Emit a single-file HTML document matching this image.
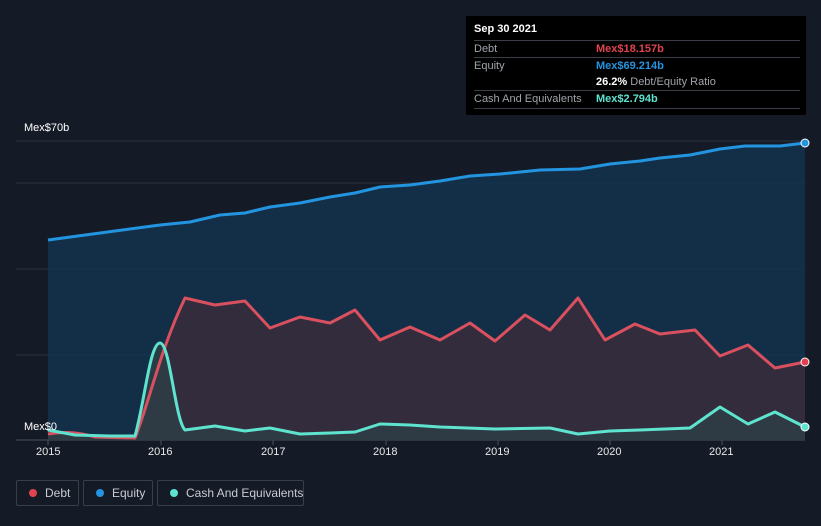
<!DOCTYPE html><html><head><style>
body{margin:0;background:#151b26;width:821px;height:526px;overflow:hidden;font-family:"Liberation Sans",sans-serif;position:relative}
.tt{position:absolute;left:466px;top:16px;width:340px;height:99px;background:#000;color:#fff;font-size:11px}
.r{position:absolute;left:8px;width:326px;border-top:1px solid #3a3f47;height:17px;line-height:17px}
.r span{position:absolute;left:122px;font-weight:bold}
.g{color:#a0a4ab}
.lg{position:absolute;top:480px;height:26px;border:1px solid #3a3f47;border-radius:2px;color:#c8cbd0;font-size:12px;line-height:24px;box-sizing:border-box;padding-left:28px;white-space:nowrap}
.lg i{position:absolute;left:12px;top:8px;width:8px;height:8px;border-radius:50%}
.ax{position:absolute;top:446px;color:#e8e8e8;font-size:11px}
</style></head><body>
<svg width="821" height="526" style="position:absolute;left:0;top:0">
<g stroke="#2d333c" stroke-width="1"><line x1="16" y1="141" x2="805" y2="141"/><line x1="16" y1="183" x2="805" y2="183"/><line x1="16" y1="269" x2="805" y2="269"/><line x1="16" y1="355" x2="805" y2="355"/><line x1="16" y1="440" x2="805" y2="440" stroke="#4a5058"/></g>
<path d="M48,240 L160,225 190,222 220,215 245,213 270,207 300,203 330,197 355,193 380,187 410,185 440,181 470,176 500,174 540,170 580,169 610,164 640,161 660,158 690,155 720,149 745,146 780,146 805,143 L805,440 48,440Z" fill="#13324d" opacity="0.9"/>
<path d="M48,434 C60,432 75,431 95,437 L135,438 C150,400 160,350 185,298 L215,305 245,301 270,328 300,317 330,323 355,310 380,340 410,327 440,340 470,323 495,341 525,315 550,330 578,298 605,340 635,324 660,334 695,330 720,356 748,345 775,368 805,362 L805,440 48,440Z" fill="#3a2c3c" opacity="0.85"/>
<path d="M48,430 L75,435 110,436 135,436 C145,400 150,343 160,343 C170,343 175,420 185,430 L215,426 245,431 270,428 300,434 330,433 355,432 380,424 410,425 440,427 495,429 550,428 578,434 610,431 640,430 690,428 720,407 748,424 775,412 805,427 L805,440 48,440Z" fill="#2e4046" opacity="0.8"/>
<g fill="none" stroke-width="3" stroke-linejoin="round">
<path d="M48,240 L160,225 190,222 220,215 245,213 270,207 300,203 330,197 355,193 380,187 410,185 440,181 470,176 500,174 540,170 580,169 610,164 640,161 660,158 690,155 720,149 745,146 780,146 805,143" stroke="#2394df"/>
<path d="M48,434 C60,432 75,431 95,437 L135,438 C150,400 160,350 185,298 L215,305 245,301 270,328 300,317 330,323 355,310 380,340 410,327 440,340 470,323 495,341 525,315 550,330 578,298 605,340 635,324 660,334 695,330 720,356 748,345 775,368 805,362" stroke="#d9505e"/>
<path d="M48,430 L75,435 110,436 135,436 C145,400 150,343 160,343 C170,343 175,420 185,430 L215,426 245,431 270,428 300,434 330,433 355,432 380,424 410,425 440,427 495,429 550,428 578,434 610,431 640,430 690,428 720,407 748,424 775,412 805,427" stroke="#5ee3cf"/>
</g>
<circle cx="805" cy="143" r="4" fill="#2394df" stroke="#fff" stroke-width="1"/>
<circle cx="805" cy="362" r="4" fill="#e04050" stroke="#fff" stroke-width="1"/>
<circle cx="805" cy="427" r="4" fill="#5ee3cf" stroke="#fff" stroke-width="1"/>
<g stroke="#4a5058"><line x1="48" y1="440" x2="48" y2="445"/><line x1="161" y1="440" x2="161" y2="445"/><line x1="273" y1="440" x2="273" y2="445"/><line x1="386" y1="440" x2="386" y2="445"/><line x1="498" y1="440" x2="498" y2="445"/><line x1="610" y1="440" x2="610" y2="445"/><line x1="722" y1="440" x2="722" y2="445"/></g>
</svg>
<div style="position:absolute;left:24px;top:122px;color:#fff;font-size:11px">Mex$70b</div>
<div style="position:absolute;left:24px;top:421px;color:#fff;font-size:11px">Mex$0</div>
<div class="ax" style="left:36px">2015</div><div class="ax" style="left:148px">2016</div><div class="ax" style="left:261px">2017</div><div class="ax" style="left:373px">2018</div><div class="ax" style="left:485px">2019</div><div class="ax" style="left:597px">2020</div><div class="ax" style="left:709px">2021</div>
<div class="tt">
<div style="position:absolute;left:8px;top:7px;font-weight:bold;font-size:11px">Sep 30 2021</div>
<div class="r g" style="top:24px">Debt<span style="color:#e0434f">Mex$18.157b</span></div>
<div class="r g" style="top:41px">Equity<span style="color:#2394df">Mex$69.214b</span></div>
<div class="r g" style="top:58px;border:none"><span style="color:#fff">26.2% <b style="color:#a0a4ab;font-weight:normal">Debt/Equity Ratio</b></span></div>
<div class="r g" style="top:74px;border-bottom:1px solid #3a3f47">Cash And Equivalents<span style="color:#5ee3cf">Mex$2.794b</span></div>
</div>
<div class="lg" style="left:16px;width:63px;padding-left:28px"><i style="background:#e0434f"></i>Debt</div>
<div class="lg" style="left:83px;width:70px"><i style="background:#2394df"></i>Equity</div>
<div class="lg" style="left:157px;width:147px"><i style="background:#5ee3cf"></i>Cash And Equivalents</div>
</body></html>
